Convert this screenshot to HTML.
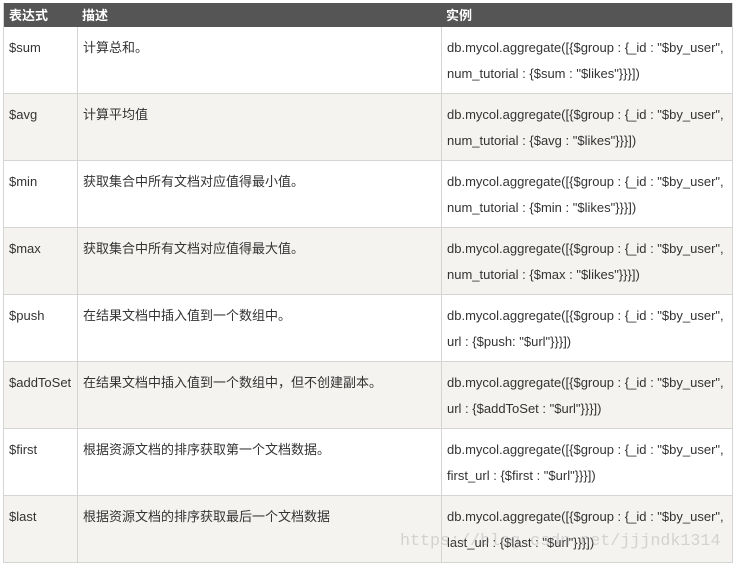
<!DOCTYPE html>
<html><head><meta charset="utf-8"><style>
body{margin:0;background:#fff;width:734px;height:564px;overflow:hidden;font-family:"Liberation Sans","Noto Sans CJK SC",sans-serif;font-size:13px;color:#333}
.t{position:absolute;left:3px;top:3px;width:728px;border-left:1px solid #d4d4d4;border-right:1px solid #d4d4d4}
.h{height:24px;background:#555;color:#fff;font-weight:bold;position:relative}
.r{height:66px;border-bottom:1px solid #d4d4d4;position:relative}
.r:nth-child(odd){background:#f4f3f0}
.c{position:absolute;top:0;bottom:0;padding:8px 0 0 5px;line-height:26px;box-sizing:border-box;white-space:nowrap}
.h .c{padding-top:0;line-height:25px}
.a{left:0;width:73px}
.b{left:73px;width:364px;border-left:1px solid #d4d4d4}
.d{left:437px;width:291px;border-left:1px solid #d4d4d4}
.h .b,.h .d{border-left:none}
.wm{position:absolute;left:400px;top:532px;font-family:"Liberation Mono",monospace;font-size:16.7px;color:rgba(150,150,150,.35);white-space:nowrap}
</style></head><body>
<div class="t">
<div class="h"><div class="c a">表达式</div><div class="c b">描述</div><div class="c d">实例</div></div>
<div class="r"><div class="c a">$sum</div><div class="c b">计算总和。</div><div class="c d">db.mycol.aggregate([{$group : {_id : "$by_user",<br>num_tutorial : {$sum : "$likes"}}}])</div></div>
<div class="r"><div class="c a">$avg</div><div class="c b">计算平均值</div><div class="c d">db.mycol.aggregate([{$group : {_id : "$by_user",<br>num_tutorial : {$avg : "$likes"}}}])</div></div>
<div class="r"><div class="c a">$min</div><div class="c b">获取集合中所有文档对应值得最小值。</div><div class="c d">db.mycol.aggregate([{$group : {_id : "$by_user",<br>num_tutorial : {$min : "$likes"}}}])</div></div>
<div class="r"><div class="c a">$max</div><div class="c b">获取集合中所有文档对应值得最大值。</div><div class="c d">db.mycol.aggregate([{$group : {_id : "$by_user",<br>num_tutorial : {$max : "$likes"}}}])</div></div>
<div class="r"><div class="c a">$push</div><div class="c b">在结果文档中插入值到一个数组中。</div><div class="c d">db.mycol.aggregate([{$group : {_id : "$by_user",<br>url : {$push: "$url"}}}])</div></div>
<div class="r"><div class="c a">$addToSet</div><div class="c b">在结果文档中插入值到一个数组中，但不创建副本。</div><div class="c d">db.mycol.aggregate([{$group : {_id : "$by_user",<br>url : {$addToSet : "$url"}}}])</div></div>
<div class="r"><div class="c a">$first</div><div class="c b">根据资源文档的排序获取第一个文档数据。</div><div class="c d">db.mycol.aggregate([{$group : {_id : "$by_user",<br>first_url : {$first : "$url"}}}])</div></div>
<div class="r"><div class="c a">$last</div><div class="c b">根据资源文档的排序获取最后一个文档数据</div><div class="c d">db.mycol.aggregate([{$group : {_id : "$by_user",<br>last_url : {$last : "$url"}}}])</div></div>
</div>
<div class="wm">https://blog.csdn.net/jjjndk1314</div>
</body></html>
